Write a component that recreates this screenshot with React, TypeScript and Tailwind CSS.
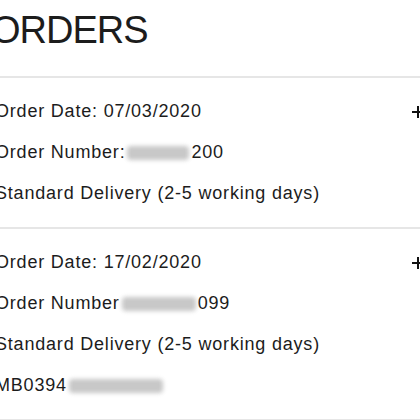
const Plus = () => (
  <svg width="12" height="12" viewBox="0 0 12 12" className="shrink-0">
    <path d="M0 6h12M6 0v12" stroke="#111" strokeWidth="2" />
  </svg>
);

const Blur = ({ w }: { w: number }) => (
  <span
    className="mx-[2px] inline-block h-[14px] rounded-sm bg-[#c8c8c8] align-middle blur-[2px]"
    style={{ width: w }}
  />
);

function OrderRow({ children, plus }: { children: React.ReactNode; plus?: boolean }) {
  return (
    <div className="flex h-[41px] items-center justify-between">
      <div className="flex items-center">{children}</div>
      {plus && <Plus />}
    </div>
  );
}

export default function App() {
  return (
    <div className="h-[420px] w-[420px] overflow-hidden bg-white text-[#1c1c1c] [font-family:'Liberation_Sans',sans-serif]">
      <div className="-ml-[5px] w-[429px]">
        <h1 className="-ml-[4px] pt-[5px] pb-[21px] text-[38px] font-normal leading-[50px] tracking-[-1px]">
          ORDERS
        </h1>
        <section className="border-t-2 border-[#e6e6e6] pt-[13px] pb-[13px] text-[18px] tracking-[0.8px]">
          <OrderRow plus>Order Date: 07/03/2020</OrderRow>
          <OrderRow>
            Order Number:
            <Blur w={62} />
            200
          </OrderRow>
          <OrderRow>Standard Delivery (2-5 working days)</OrderRow>
        </section>
        <section className="border-t-2 border-b-2 border-[#e6e6e6] pt-[13px] pb-[13px] text-[18px] tracking-[0.8px]">
          <OrderRow plus>Order Date: 17/02/2020</OrderRow>
          <OrderRow>
            Order Number
            <Blur w={74} />
            099
          </OrderRow>
          <OrderRow>Standard Delivery (2-5 working days)</OrderRow>
          <OrderRow>
            MB0394
            <Blur w={94} />
          </OrderRow>
        </section>
      </div>
    </div>
  );
}
